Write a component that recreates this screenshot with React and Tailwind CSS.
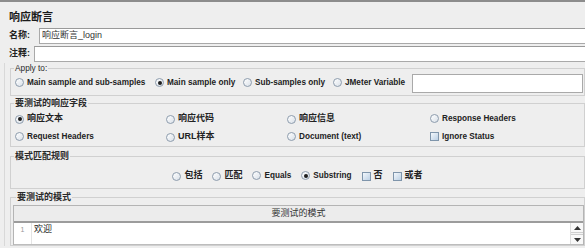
import React from "react";

function Radio({ checked }) {
  return (
    <span className="inline-flex w-[9px] h-[9px] shrink-0 items-center justify-center rounded-full border border-[#8d9cad] bg-linear-to-br from-[#ffffff] to-[#d9e0e8]">
      {checked && <span className="w-[4px] h-[4px] rounded-full bg-[#1e1e1e]" />}
    </span>
  );
}

function Check() {
  return (
    <span className="inline-block w-[9px] h-[9px] shrink-0 border border-[#7f95ab] bg-linear-to-br from-[#f4f8fc] to-[#bcd0e4]" />
  );
}

function Opt({ checked, box, children, cjk, className = "" }) {
  return (
    <span className={"flex items-center gap-[3px] whitespace-nowrap " + className}>
      {box ? <Check /> : <Radio checked={checked} />}
      <span className={cjk ? "text-[9px] font-bold" : "text-[8.2px] font-bold"}>{children}</span>
    </span>
  );
}

function Legend({ children, cjk }) {
  return (
    <legend className={"ml-[3px] px-[1px] leading-[10px] text-[#2a2a2a] " + (cjk ? "text-[9px] font-bold" : "text-[8.3px]")}>
      {children}
    </legend>
  );
}

export default function App() {
  return (
    <div className="w-[585px] h-[248px] overflow-hidden bg-[#eeeeee] border-t-[2px] border-[#8c8c8c] text-[#222] font-['Liberation_Sans','Noto_Sans_CJK_SC',sans-serif]">
      {/* title */}
      <div className="h-[26px] pt-[4px] pl-[9px] flex items-center text-[11px] font-bold text-[#1a1a1a]">
        响应断言
      </div>

      {/* name */}
      <div className="h-[16px] flex items-stretch">
        <div className="w-[39px] pl-[9px] flex items-center text-[9px] font-bold">名称:</div>
        <div className="flex-1 border border-r-0 border-[#a9a9a9] border-t-[#999999] bg-white pl-[2px] flex items-center text-[9px] text-[#333]">
          响应断言_login
        </div>
      </div>

      {/* comment */}
      <div className="mt-[2px] h-[16px] flex items-stretch">
        <div className="w-[34px] pl-[9px] flex items-center text-[9px] font-bold">注释:</div>
        <div className="flex-1 border border-r-0 border-[#a9a9a9] border-t-[#999999] bg-white" />
      </div>

      <div className="mt-[1px] ml-[4px] border-l border-[#d8d8d8] pl-[5px]">
        {/* Apply to */}
        <fieldset className="border border-[#d0d0d0]">
          <Legend>Apply to:</Legend>
          <div className="h-[20px] mb-[2px] flex items-center pl-[4px]">
            <Opt className="w-[140px]">Main sample and sub-samples</Opt>
            <Opt className="w-[88px]" checked>Main sample only</Opt>
            <Opt className="w-[90px]">Sub-samples only</Opt>
            <Opt className="w-[79px]">JMeter Variable</Opt>
            <div className="flex-1 h-[19px] mr-[1px] border border-[#a9a9a9] bg-white" />
          </div>
        </fieldset>

        {/* response field */}
        <fieldset className="mt-[2px] border border-[#d0d0d0]">
          <Legend cjk>要测试的响应字段</Legend>
          <div className="pt-[2px] pl-[4px] grid grid-cols-[151px_121px_143px_1fr] auto-rows-[18px] items-center">
            <Opt cjk checked>响应文本</Opt>
            <Opt cjk>响应代码</Opt>
            <Opt cjk>响应信息</Opt>
            <Opt>Response Headers</Opt>
            <Opt>Request Headers</Opt>
            <Opt cjk>URL样本</Opt>
            <Opt>Document (text)</Opt>
            <Opt box>Ignore Status</Opt>
          </div>
        </fieldset>

        {/* pattern rule */}
        <fieldset className="mt-[4px] border border-[#d0d0d0]">
          <Legend cjk>模式匹配规则</Legend>
          <div className="pt-[6px] pb-[3px]">
            <div className="h-[18px] flex items-center justify-center gap-[10px]">
              <Opt cjk>包括</Opt>
              <Opt cjk>匹配</Opt>
              <Opt>Equals</Opt>
              <Opt checked>Substring</Opt>
              <Opt cjk box>否</Opt>
              <Opt cjk box>或者</Opt>
            </div>
          </div>
        </fieldset>

        {/* patterns to test */}
        <fieldset className="mt-[3px] border border-[#d0d0d0] pl-[2px]">
          <Legend cjk>要测试的模式</Legend>
          <div className="pt-[3px]">
            <div className="border border-[#b4b4b4] border-b-0">
              <div className="h-[15px] bg-[#ececec] flex items-center justify-center text-[9px] text-[#333]">
                要测试的模式
              </div>
              <div className="h-[2px] bg-[#9c9c9c]" />
              <div className="h-[22px] bg-white flex border-b border-[#bdbdbd]">
                <div className="w-[18px] border-r border-[#e4e4e4] flex items-start justify-center pt-[2px] text-[7px] text-[#999]">
                  1
                </div>
                <div className="flex-1 pl-[2px] pt-[1px] text-[9px] leading-[11px] text-[#222]">欢迎</div>
                <div className="w-[13px] flex flex-col justify-between bg-[#f4f4f4] border-l border-[#dcdcdc]">
                  <div className="h-[10px] flex items-center justify-center border-b border-[#cfcfcf] bg-[#f8f8f8]">
                    <svg width="7" height="4" viewBox="0 0 7 4"><path d="M0 4 L3.5 0 L7 4 Z" fill="#333" /></svg>
                  </div>
                  <div className="h-[10px] flex items-center justify-center border-t border-[#cfcfcf] bg-[#f8f8f8]">
                    <svg width="7" height="4" viewBox="0 0 7 4"><path d="M0 0 L3.5 4 L7 0 Z" fill="#333" /></svg>
                  </div>
                </div>
              </div>
            </div>
          </div>
        </fieldset>
      </div>
    </div>
  );
}
